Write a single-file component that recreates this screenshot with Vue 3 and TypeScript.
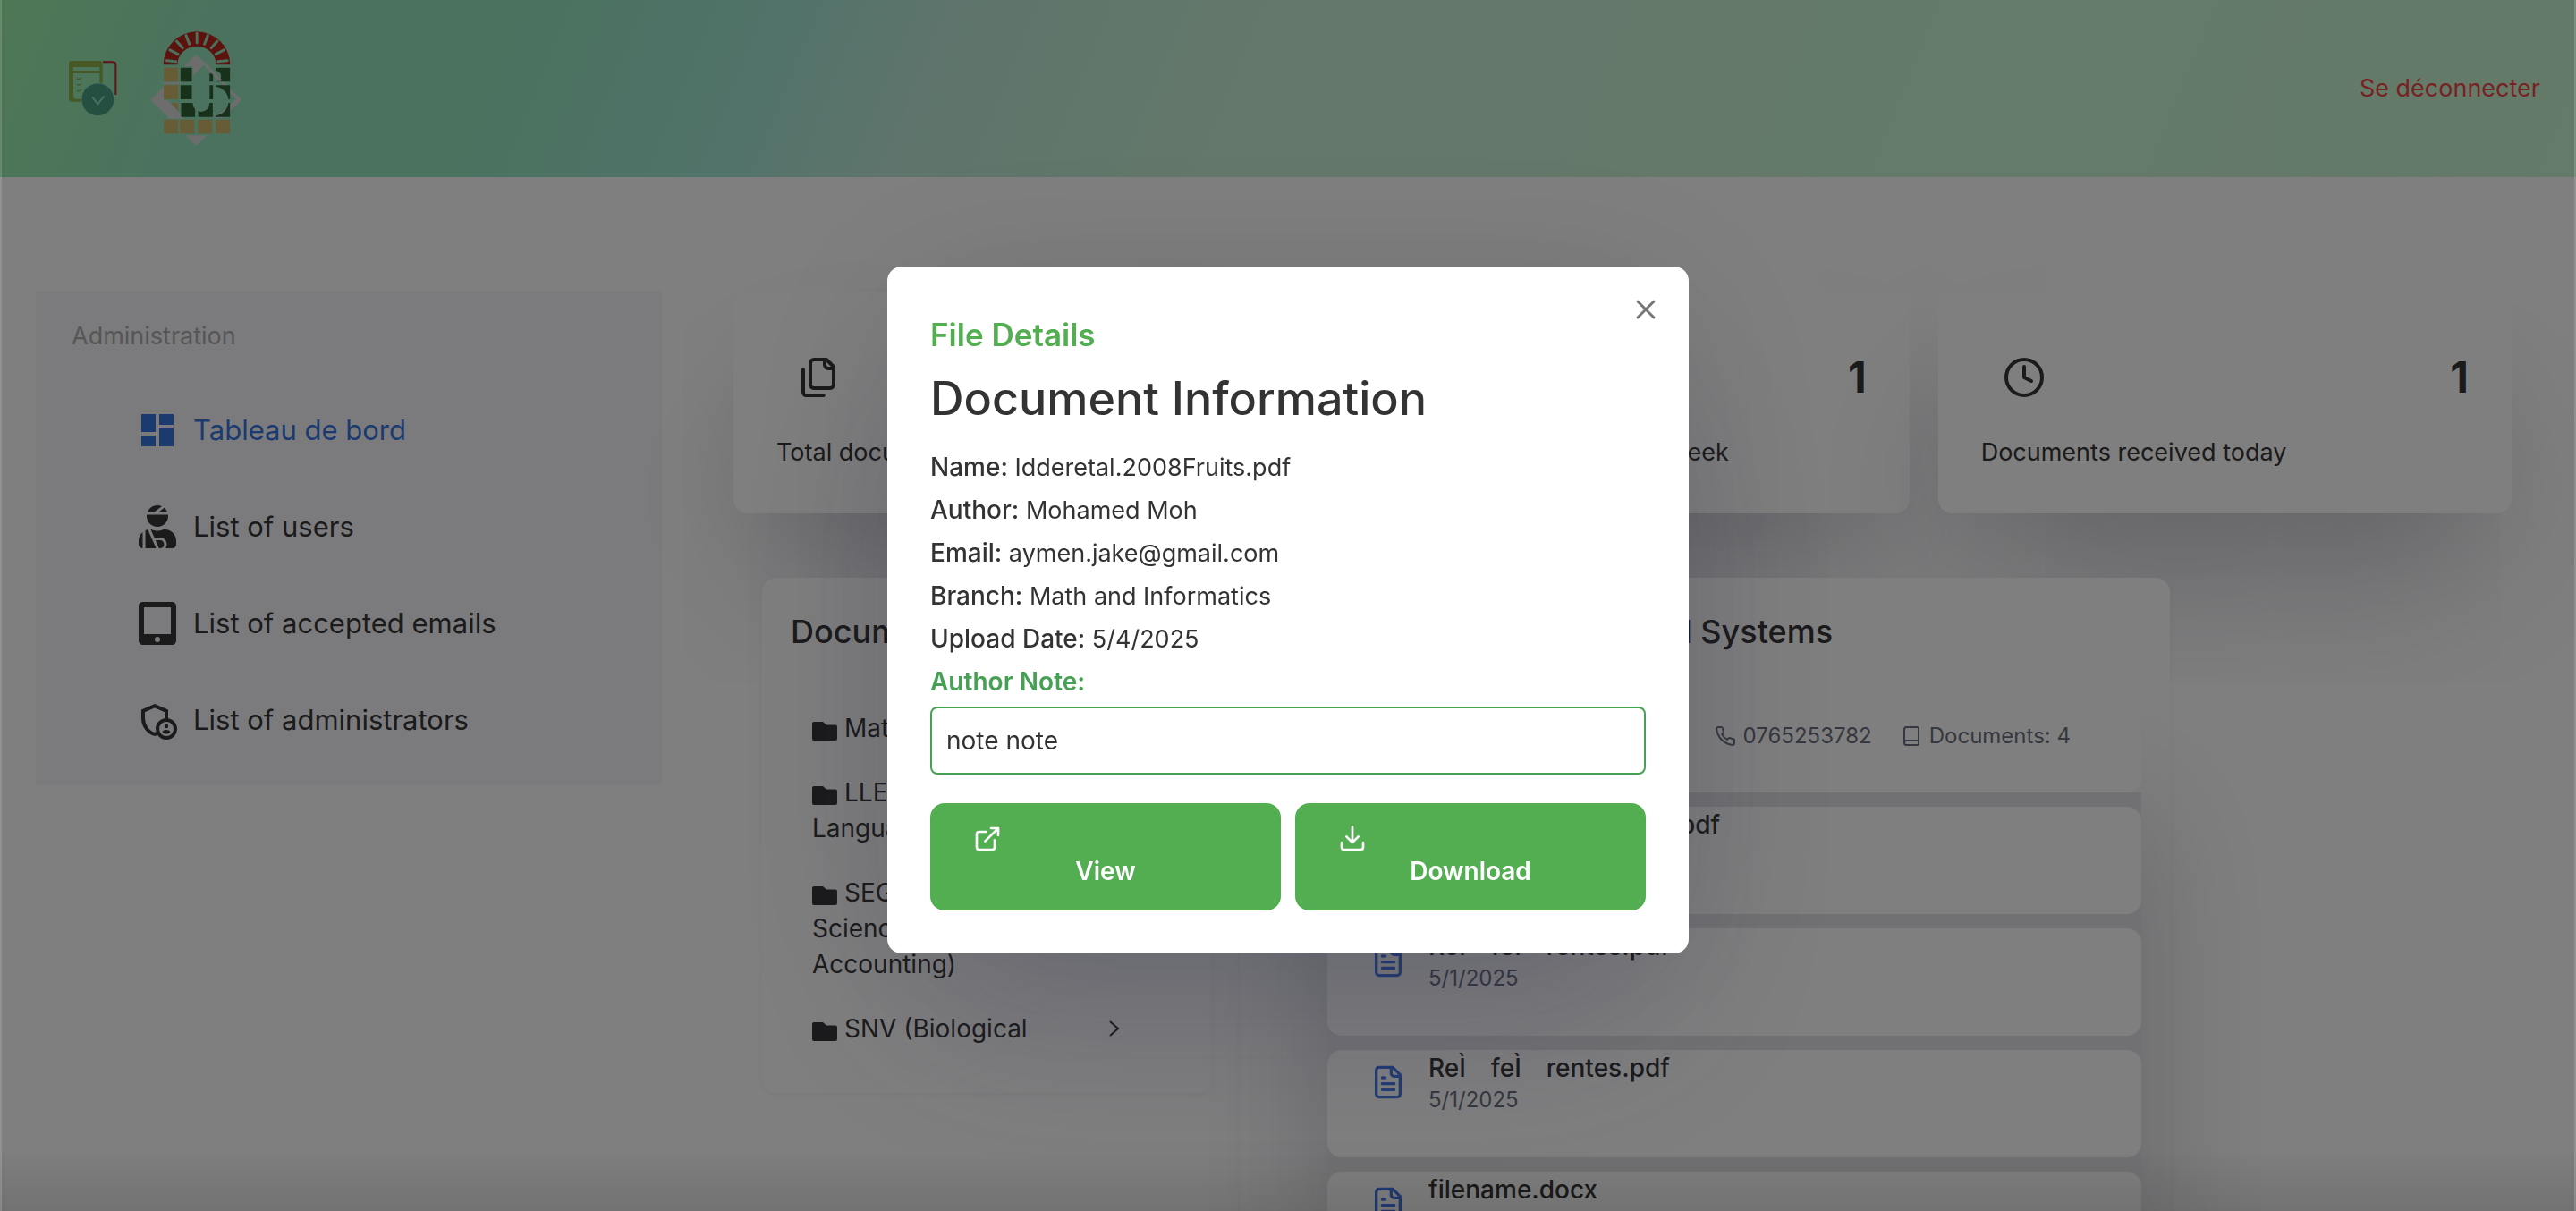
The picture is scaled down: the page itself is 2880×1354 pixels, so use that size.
<script setup lang="ts">
import { ref } from 'vue'

interface NavItem { label: string; icon: 'dashboard' | 'users' | 'tablet' | 'admin'; active?: boolean }
interface Stat { label: string; value: number; icon: 'files' | 'calendar' | 'clock' }
interface FileRow { name: string; date: string }

const navItems: NavItem[] = [
  { label: 'Tableau de bord', icon: 'dashboard', active: true },
  { label: 'List of users', icon: 'users' },
  { label: 'List of accepted emails', icon: 'tablet' },
  { label: 'List of administrators', icon: 'admin' },
]

const stats: Stat[] = [
  { label: 'Total documents', value: 4, icon: 'files' },
  { label: 'Documents received this week', value: 1, icon: 'calendar' },
  { label: 'Documents received today', value: 1, icon: 'clock' },
]

const branches: string[] = [
  'Math and Info',
  'LLE (Letters and\nLanguages)',
  'SEG (Economic\nSciences and\nAccounting)',
  'SNV (Biological',
]

const files: FileRow[] = [
  { name: 'Idderetal.2008Fruits.pdf', date: '5/4/2025' },
  { name: 'ReÌ\u2003feÌ\u2003rentes.pdf', date: '5/1/2025' },
  { name: 'ReÌ\u2003feÌ\u2003rentes.pdf', date: '5/1/2025' },
  { name: 'filename.docx', date: '4/30/2025' },
]

const details: [string, string][] = [
  ['Name:', 'Idderetal.2008Fruits.pdf'],
  ['Author:', 'Mohamed Moh'],
  ['Email:', 'aymen.jake@gmail.com'],
  ['Branch:', 'Math and Informatics'],
  ['Upload Date:', '5/4/2025'],
]

const note = ref('note note')
const open = ref(true)

const rays = Array.from({ length: 9 }, (_, i) => {
  const a = ((6 + i * 21) * Math.PI) / 180
  const p = (r: number) => `${242 + r * Math.cos(a)} ${150 - r * Math.sin(a)}`
  return `M${p(71)}L${p(102)}`
}).join('')
</script>

<template>
  <div class="page">
    <header class="topbar">
      <a class="brand" href="#" aria-label="Home">
        <svg class="app-logo" viewBox="228 198 168 192" fill="none">
          <path d="M345 205h34a9 9 0 0 1 9 9v101" stroke="#c0262c" stroke-width="6" />
          <path fill="#8ab04a" fill-rule="evenodd" d="M240 201h95a9 9 0 0 1 9 9v119a9 9 0 0 1-9 9h-95a9 9 0 0 1-9-9V210a9 9 0 0 1 9-9zM246 222v12h88v-12zM246 243v79a7 7 0 0 0 7 7h81v-86z" />
          <path d="M257 260q8 6 15-2M257 280q8 6 15-2M257 300q8 6 15-2" stroke="#8ab04a" stroke-width="4" />
          <circle cx="328" cy="331" r="55" fill="#489f83" stroke="#95e3bd" stroke-width="3" />
          <path d="M311 324l17 22 20-25" stroke="#95e3bd" stroke-width="6" stroke-linecap="round" />
        </svg>
        <svg class="emblem" viewBox="80 35 320 396">
          <mask id="letters">
            <rect x="80" y="35" width="320" height="396" fill="#fff" />
            <path d="M226 160h58v123a28 28 0 0 1-56 0z" />
            <path d="M304 173a19 19 0 0 1 0 38zM300 226a48 49 0 0 1 0 98z" />
          </mask>
          <path fill="#b9261c" d="M129.500 153a112 111 0 0 1 224 0h-47a65 62 0 0 0-130 0z" />
          <path :d="rays" stroke="#95e3bd" stroke-width="9" stroke-linecap="round" />
          <path fill="#d0b96e" d="M131 163h48v47h-48zM131 222h48v47h-48zM131 337h48v47h-48zM185 337h48v47h-48zM246 337h48v47h-48zM305 337h48v47h-48z" />
          <path fill="#d0b96e" d="M150 281h29v28z" />
          <path fill="#dadada" d="M239 118l153 153-60 60h-30l71-61-107-119-37 40v-33h-30zM131 212h56v7h-56zM131 227v42l16 5 46 52v8h-43l-64-63zM204 390h72l-37 35z" />
          <path fill="#d0b96e" d="M131 222h48v47h-48z" />
          <g mask="url(#letters)" fill="#306234">
            <path d="M187 163h38v47h-38zM187 222h38v47h-38zM189 281h47v47h-47zM246 281h49v47h-49zM284 183h12v27h-12zM284 222h12v47h-12zM305 163h48v47h-48zM305 222h48v47h-48zM305 281h48v47h-48z" />
          </g>
          <path d="M262 145l60 62" stroke="#dadada" stroke-width="9" />
        </svg>
      </a>
      <a class="logout" href="#">Se déconnecter</a>
    </header>

    <div class="body">
      <nav class="sidebar">
        <p class="nav-heading">Administration</p>
        <a v-for="item in navItems" :key="item.label" href="#" class="nav-item" :class="{ active: item.active }">
          <svg v-if="item.icon === 'dashboard'" viewBox="0 0 24 24" fill="currentColor"><path d="M3 13h8V3H3zm0 8h8v-6H3zm10 0h8V11h-8zm0-18v6h8V3z" /></svg>
          <svg v-else-if="item.icon === 'users'" viewBox="0 0 448 512" fill="currentColor"><path d="M277.370 11.980C261.080 4.470 243.110 0 224 0c-53.690 0-99.500 33.130-118.510 80h81.190l90.690-68.020zM342.510 80c-7.900-19.470-20.670-36.200-36.490-49.520L239.990 80h102.520zM224 256c70.690 0 128-57.310 128-128 0-5.480-.95-10.700-1.610-16H97.610c-.67 5.300-1.610 10.520-1.610 16 0 70.690 57.310 128 128 128zM80 299.700V512h128.260l-98.450-221.520A132.835 132.835 0 0 0 80 299.700zM0 464c0 26.510 21.490 48 48 48V320.240C18.880 344.890 0 381.260 0 422.400V464zm256-48h-55.380l42.670 96H256c26.470 0 48-21.530 48-48s-21.530-48-48-48zm57.600-128h-16.710c-22.240 10.180-46.880 16-72.890 16s-50.650-5.820-72.890-16h-7.370l42.670 96H256c44.110 0 80 35.890 80 80 0 18.080-6.260 34.590-16.410 48H400c26.510 0 48-21.490 48-48v-41.600c0-74.230-60.170-134.400-134.400-134.400z" /></svg>
          <svg v-else-if="item.icon === 'tablet'" viewBox="0 0 448 512" fill="currentColor" fill-rule="evenodd"><path d="M400 0H48C21.500 0 0 21.500 0 48v416c0 26.500 21.500 48 48 48h352c26.500 0 48-21.500 48-48V48c0-26.500-21.500-48-48-48zM224 480a32 32 0 1 1 0-64 32 32 0 0 1 0 64zM384 384H64V64h320z" /></svg>
          <svg v-else viewBox="0 0 24 24" fill="none" stroke="currentColor" stroke-width="2">
            <path d="M17 11.500V6.920L10.500 4.100 4 6.920v4.260c0 4 2.700 7.700 6.500 8.790l1.200-.4" />
            <circle cx="17" cy="17" r="5" />
            <path stroke="none" fill="currentColor" d="M17 14.400a1.120 1.120 0 1 1 0 2.240 1.120 1.120 0 0 1 0-2.240zM17 17.500c-.73 0-2.190.36-2.240 1.080.5.710 1.320 1.170 2.240 1.170s1.740-.46 2.240-1.170c-.05-.72-1.510-1.080-2.240-1.080z" />
          </svg>
          <span>{{ item.label }}</span>
        </a>
      </nav>

      <main class="main">
        <section class="stats">
          <article v-for="s in stats" :key="s.label" class="stat">
            <div class="stat-row">
              <svg class="line" viewBox="0 0 24 24">
                <template v-if="s.icon === 'files'">
                  <path d="M20 7h-3a2 2 0 0 1-2-2V2" />
                  <path d="M9 18a2 2 0 0 1-2-2V4a2 2 0 0 1 2-2h7l4 4v10a2 2 0 0 1-2 2Z" />
                  <path d="M3 7.600v12.800A1.600 1.600 0 0 0 4.600 22h9.800" />
                </template>
                <template v-else-if="s.icon === 'calendar'">
                  <rect x="3" y="4" width="18" height="18" rx="2" />
                  <path d="M8 2v4M16 2v4M3 10h18" />
                </template>
                <template v-else>
                  <circle cx="12" cy="12" r="10" />
                  <path d="M12 6v6l4 2" />
                </template>
              </svg>
              <strong>{{ s.value }}</strong>
            </div>
            <p>{{ s.label }}</p>
          </article>
        </section>

        <div class="panels">
          <section class="panel branches">
            <h2>Documents</h2>
            <ul>
              <li v-for="b in branches" :key="b">
                <span class="branch-name"><svg class="folder" viewBox="0 0 28 21" fill="currentColor"><path d="M2 0h10l4 3.500h10a2 2 0 0 1 2 2V19a2 2 0 0 1-2 2H2a2 2 0 0 1-2-2V2a2 2 0 0 1 2-2z" /></svg>{{ b }}</span>
                <svg class="chevron" viewBox="0 0 12 20"><path d="M1 2l9 8-9 8" /></svg>
              </li>
            </ul>
          </section>

          <section class="panel files">
            <h2>Networking and Distributed Systems</h2>
            <div class="list">
              <div class="user-card">
                <span class="user-name">Mohamed Moh</span>
                <span class="meta">
                  <svg class="line" viewBox="0 0 24 24"><path d="M22 16.920v3a2 2 0 0 1-2.180 2 19.790 19.790 0 0 1-8.630-3.070 19.500 19.500 0 0 1-6-6 19.790 19.790 0 0 1-3.070-8.670A2 2 0 0 1 4.110 2h3a2 2 0 0 1 2 1.720 12.840 12.840 0 0 0 .7 2.810 2 2 0 0 1-.45 2.110L8.090 9.910a16 16 0 0 0 6 6l1.270-1.270a2 2 0 0 1 2.110-.45 12.840 12.840 0 0 0 2.810.7A2 2 0 0 1 22 16.920z" /></svg>
                  0765253782
                </span>
                <span class="meta">
                  <svg class="line" viewBox="0 0 24 24"><path d="M4 19.500v-15A2.500 2.500 0 0 1 6.500 2H19a1 1 0 0 1 1 1v18a1 1 0 0 1-1 1H6.500a1 1 0 0 1 0-5H20" /></svg>
                  Documents: 4
                </span>
              </div>
              <div class="file-list">
                <article v-for="(f, i) in files" :key="i" class="file-card">
                  <svg class="line" viewBox="0 0 24 24">
                    <path d="M15 2H6a2 2 0 0 0-2 2v16a2 2 0 0 0 2 2h12a2 2 0 0 0 2-2V7Z" />
                    <path d="M14 2v4a2 2 0 0 0 2 2h4M10 9H8M16 13H8M16 17H8" />
                  </svg>
                  <div>
                    <h3>{{ f.name }}</h3>
                    <p>{{ f.date }}</p>
                  </div>
                </article>
              </div>
            </div>
          </section>
        </div>
      </main>
    </div>

    <div v-if="open" class="overlay">
      <div class="modal" role="dialog" aria-modal="true" aria-labelledby="modal-title">
        <button class="close" type="button" aria-label="Close" @click="open = false">
          <svg viewBox="0 0 24 24"><path d="M3 3l18 18M21 3L3 21" /></svg>
        </button>
        <h2 id="modal-title">File Details</h2>
        <h1>Document Information</h1>
        <div class="details">
          <p v-for="[k, v] in details" :key="k"><b>{{ k }}</b> {{ v }}</p>
          <label for="author-note">Author Note:</label>
        </div>
        <input id="author-note" v-model="note" type="text" readonly />
        <div class="actions">
          <button type="button">
            <svg class="line" viewBox="0 0 24 24"><path d="M18 13v6a2 2 0 0 1-2 2H5a2 2 0 0 1-2-2V8a2 2 0 0 1 2-2h6M15 3h6v6M10 14L21 3" /></svg>
            View
          </button>
          <button type="button">
            <svg class="line" viewBox="0 0 24 24"><path d="M21 15v4a2 2 0 0 1-2 2H5a2 2 0 0 1-2-2v-4M7 10l5 5 5-5M12 15V2" /></svg>
            Download
          </button>
        </div>
      </div>
    </div>
  </div>
</template>

<style>
body {
  margin: 0;
  background: #fff;
}
</style>

<style scoped>
* {
  box-sizing: border-box;
}

.page {
  --float-shadow: 0 100px 200px -40px rgba(50, 50, 93, 0.25), 0 60px 120px -40px rgba(0, 0, 0, 0.1);
  height: 100vh;
  overflow: hidden;
  background: #fff;
  color: #363637;
  font: 400 28px/40px Inter, "Noto Sans", sans-serif;
}

h1, h2, h3, p, ul {
  margin: 0;
  padding: 0;
}

svg {
  display: block;
  flex: none;
}

.line {
  fill: none;
  stroke: currentColor;
  stroke-width: 2;
  stroke-linecap: round;
  stroke-linejoin: round;
}

a {
  color: inherit;
  text-decoration: none;
}

.topbar {
  display: flex;
  align-items: center;
  justify-content: space-between;
  height: 198px;
  padding: 0 40px 0 76px;
  background: linear-gradient(112deg, #9ef0ac 0%, #95e4bd 9%, #95e4bf 20%, #a4e6d4 30%, #bce9d8 36%, #c8f2d6 48%, #caf6d3 100%);
}

.brand {
  display: flex;
  align-items: center;
  gap: 34px;
}

.app-logo {
  width: 56px;
  height: 64px;
}

.emblem {
  width: 107px;
  height: 132px;
}

.logout {
  color: #ef4444;
  font-size: 27px;
}

.body {
  display: flex;
  align-items: flex-start;
  gap: 80px;
  padding: 128px 72px 0 40px;
}

.sidebar {
  flex: 0 0 700px;
  padding: 30px 40px 19px;
  background: #f7f7fb;
}

.nav-heading {
  margin-bottom: 31px;
  color: #acacac;
  font-size: 27px;
}

.nav-item {
  display: flex;
  align-items: center;
  gap: 16px;
  height: 108px;
  padding-left: 72px;
  font-size: 31px;
}

.nav-item svg {
  width: 48px;
  height: 48px;
}

.nav-item.active {
  color: #3676e0;
}

.main {
  flex: 1;
  min-width: 0;
}

.stats {
  display: grid;
  grid-template-columns: repeat(3, 1fr);
  gap: 32px;
}

.stat {
  padding: 48px;
  border-radius: 16px;
  background: #fff;
  box-shadow: var(--float-shadow);
  font-size: 27px;
}

.stat-row {
  display: flex;
  align-items: center;
  justify-content: space-between;
  margin-bottom: 16px;
}

.stat-row svg {
  width: 48px;
  height: 48px;
  margin: 24px;
}

.stat-row strong {
  font-size: 48px;
  font-weight: 700;
}

.panels {
  position: relative;
  z-index: 0;
  display: grid;
  grid-template-columns: 503px minmax(0, 1fr);
  align-items: start;
  gap: 32px;
  max-width: 1574px;
  margin: 72px 0 0 32px;
}

.panel {
  padding: 32px;
  border-radius: 16px;
  background: #fff;
  box-shadow: 0 2px 8px rgba(0, 0, 0, 0.05);
}

.panel h2 {
  font-size: 36px;
  font-weight: 500;
  line-height: 56px;
}

.branches ul {
  margin: 44px 0 4px;
  list-style: none;
}

.branches li {
  display: flex;
  align-items: center;
  justify-content: space-between;
  padding: 16px 71px 16px 24px;
}

.branch-name {
  white-space: pre-line;
}

.folder {
  display: inline-block;
  width: 28px;
  height: 21px;
  margin-right: 8px;
  vertical-align: -4px;
}

.chevron {
  width: 12px;
  height: 20px;
  fill: none;
  stroke: currentColor;
  stroke-width: 2;
}

.list {
  margin: 32px 0 0 65px;
}

.user-card,
.file-card {
  display: flex;
  height: 120px;
  border-radius: 16px;
  background: #fff;
}

.user-card {
  position: relative;
  z-index: 1;
  align-items: center;
  gap: 32px;
  padding: 0 79px 6px 48px;
}

.user-name {
  margin-right: auto;
}

.meta {
  display: flex;
  align-items: center;
  gap: 8px;
  color: #6b7080;
  font-size: 24px;
}

.meta svg {
  width: 24px;
  height: 24px;
}

.file-list {
  display: flex;
  flex-direction: column;
  gap: 16px;
  padding: 16px 0;
  background: #e3e3e6;
  box-shadow: 0 20px 140px rgba(50, 50, 80, 0.24);
}

.file-card {
  align-items: flex-start;
  gap: 25px;
  padding: 0 48px;
}

.file-card svg {
  width: 40px;
  height: 40px;
  margin-top: 16px;
  color: #4478e8;
}

.file-card h3 {
  font-size: 28px;
  font-weight: 500;
  line-height: 40px;
}

.file-card p {
  color: #6b7080;
  font-size: 24px;
  line-height: 32px;
}

.overlay {
  position: fixed;
  z-index: 10;
  inset: 0;
  display: flex;
  align-items: center;
  justify-content: center;
  padding-top: 10px;
  border: solid rgba(255, 255, 255, 0.14);
  border-width: 0 2px;
  background: linear-gradient(to top, rgba(0, 0, 0, 0.1), transparent 72px), rgba(0, 0, 0, 0.5);
}

.modal {
  position: relative;
  width: 896px;
  padding: 48px;
  border-radius: 16px;
  background: #fff;
  box-shadow: 0 100px 200px -40px rgba(50, 50, 93, 0.25), 0 20px 200px rgba(0, 0, 0, 0.1);
  color: #333;
}

.close {
  position: absolute;
  top: 32px;
  right: 32px;
  padding: 4px;
  border: 0;
  background: none;
  color: #777;
}

.close svg {
  width: 24px;
  height: 24px;
  fill: none;
  stroke: currentColor;
  stroke-width: 3;
  stroke-linecap: round;
}

.modal h2 {
  color: #52ae50;
  font-size: 35px;
  font-weight: 600;
  line-height: 56px;
}

.modal h1 {
  margin: 10px 0 22px;
  font-size: 52px;
  font-weight: 500;
  line-height: 68px;
}

.details {
  display: flex;
  flex-direction: column;
  gap: 8px;
}

.details p {
  height: 40px;
  font-size: 27px;
}

.details b {
  font-size: 28px;
  font-weight: 500;
}

.details label {
  color: #47a154;
  font-weight: 600;
}

.modal input {
  display: block;
  width: 100%;
  height: 76px;
  margin: 8px 0 32px;
  padding: 0 16px;
  border: 2px solid #47a154;
  border-radius: 8px;
  outline: 0;
  background: #fff;
  color: #333;
  font: inherit;
}

.actions {
  display: grid;
  grid-template-columns: 1fr 1fr;
  gap: 16px;
}

.actions button {
  padding: 24px 48px;
  border: 0;
  border-radius: 16px;
  background: #52ae50;
  color: #fff;
  font: inherit;
  font-weight: 600;
  text-align: center;
}

.actions svg {
  width: 32px;
  height: 32px;
}
</style>
